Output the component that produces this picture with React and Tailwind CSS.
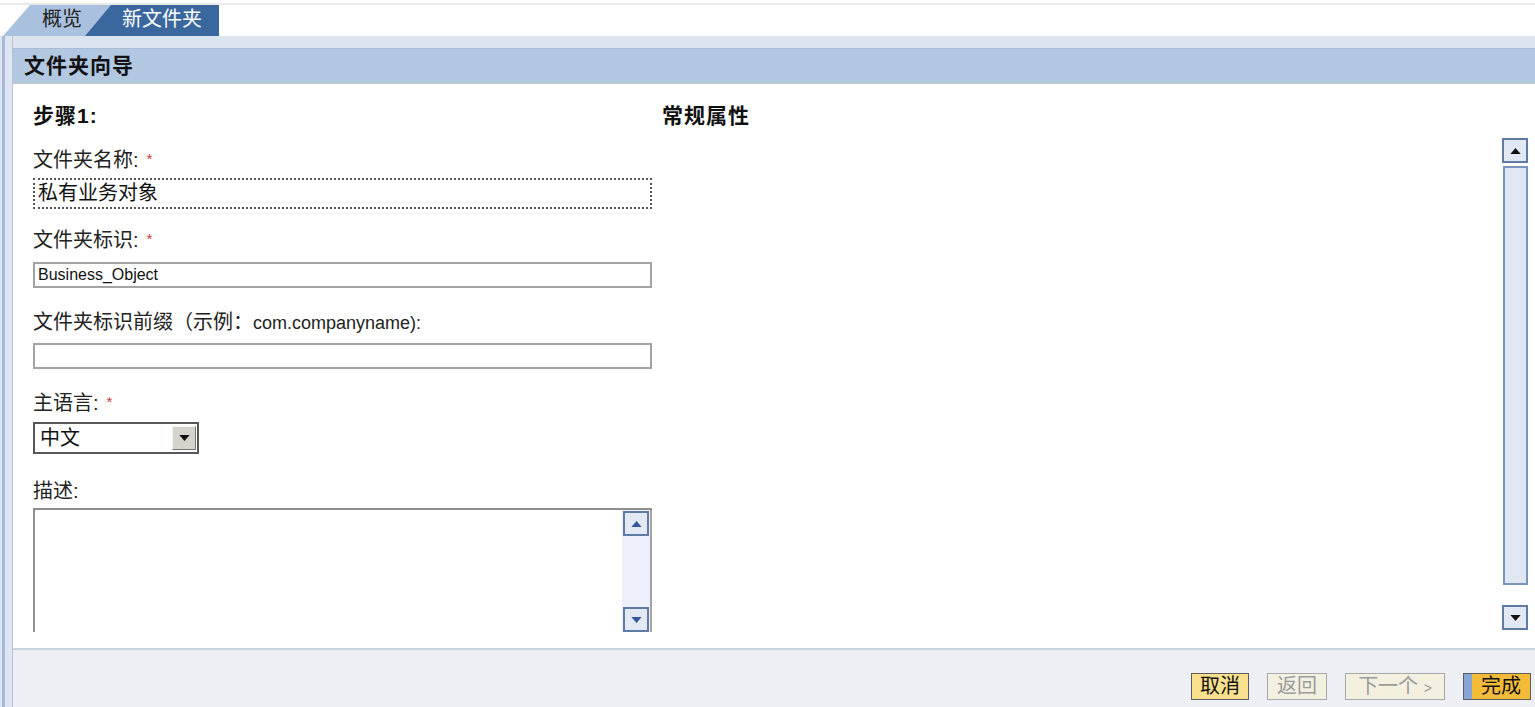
import React from "react";

const font = "font-['Liberation_Sans','Noto_Sans_CJK_SC',sans-serif]";

const Tri = ({ up, color = "#1a1a1a", w = 11, h = 6 }) => (
  <svg width={w} height={h} viewBox="0 0 12 7">
    <path d={up ? "M0 7 L6 0 L12 7 Z" : "M0 0 L6 7 L12 0 Z"} fill={color} />
  </svg>
);

const ScrollBtn = ({ up, color }) => (
  <div className="w-[26px] h-[25px] shrink-0 border-2 border-[#5f7aa5] bg-[#e2e9f5] flex items-center justify-center">
    <Tri up={up} color={color} />
  </div>
);

const Label = ({ children, required }) => (
  <div className="h-[24px] leading-[24px] text-[20px] text-[#222] whitespace-nowrap">
    {children}
    {required && (
      <span className="ml-[8px] text-[15px] text-[#cc3b3b] relative top-[-3px]">*</span>
    )}
  </div>
);

export default function App() {
  return (
    <div className={`${font} w-[1535px] h-[707px] flex flex-col bg-white overflow-hidden`}>
      {/* tab strip */}
      <div className="h-[36px] shrink-0 pt-[3px] flex flex-col">
        <div className="h-[2px] bg-[#e9e9e9]" />
        <div className="flex-1 flex items-end pl-[3px]">
          <div className="w-[109px] h-[31px] bg-[#a9c0de] [clip-path:polygon(27px_0,100%_0,100%_100%,0_100%)] pl-[39px] text-[20px] leading-[29px] text-[#222]">
            概览
          </div>
          <div className="ml-[-27px] w-[134px] h-[31px] bg-[#3b679f] [clip-path:polygon(26px_0,100%_0,100%_100%,0_100%)] pl-[37px] text-[20px] leading-[29px] text-white">
            新文件夹
          </div>
        </div>
      </div>

      {/* frame */}
      <div className="flex-1 flex bg-[#dde4f0]">
        <div className="w-[13px] shrink-0 bg-[#dfe5f3] flex border-r border-[#b6c3d1]">
          <div className="ml-[2px] w-[3px] bg-[#a9b8de]" />
        </div>

        <div className="flex-1 flex flex-col">
          <div className="h-[12px] shrink-0 bg-[#dce4ef]" />
          <div className="h-[34px] shrink-0 bg-[#b2c7e0] border-t border-[#a9bcd6] pl-[11px] text-[21px] font-bold leading-[33px] text-[#111] tracking-[1px]">
            文件夹向导
          </div>
          <div className="h-[2px] shrink-0 bg-[#bcc6d3]" />

          {/* white content panel */}
          <div className="h-[566px] shrink-0 bg-white border-b-2 border-[#c6d3dd] pl-[20px] pr-[6px] pt-[18px] flex flex-col">
            <div className="h-[28px] flex text-[21px] font-bold leading-[28px] text-[#111] tracking-[1px]">
              <div className="w-[629px]">步骤1:</div>
              <div>常规属性</div>
            </div>

            <div className="mt-[8px] h-[494px] flex">
              <div className="flex-1 overflow-hidden">
                <div className="w-[619px] pt-[10px] flex flex-col">
                  <Label required>文件夹名称:</Label>
                  <div className="mt-[6px] h-[31px] border-2 border-dotted border-[#555] px-[3px] text-[20px] leading-[26px] text-[#111]">
                    私有业务对象
                  </div>

                  <div className="mt-[19px]">
                    <Label required>文件夹标识:</Label>
                  </div>
                  <div className="mt-[10px] h-[26px] border-2 border-[#a3a3a3] px-[3px] text-[16px] leading-[22px] text-[#111]">
                    Business_Object
                  </div>

                  <div className="mt-[22px]">
                    <Label>
                      文件夹标识前缀（示例：<span className="text-[18px]">com.companyname):</span>
                    </Label>
                  </div>
                  <div className="mt-[9px] h-[26px] border-2 border-[#a3a3a3]" />

                  <div className="mt-[22px]">
                    <Label required>主语言:</Label>
                  </div>
                  <div className="mt-[7px] w-[166px] h-[32px] border-2 border-[#585858] bg-white flex items-center">
                    <div className="flex-1 pl-[5px] text-[20px] leading-[26px] text-[#111]">中文</div>
                    <div className="w-[24px] h-[24px] mr-[1px] bg-[#d6d3cc] border border-[#f4f4f4] border-r-[#777] border-b-[#777] flex items-center justify-center">
                      <Tri color="#111" w={11} h={6} />
                    </div>
                  </div>

                  <div className="mt-[25px]">
                    <Label>描述:</Label>
                  </div>
                  <div className="mt-[5px] h-[124px] flex border-t-2 border-l-2 border-[#8f8f8f]">
                    <div className="flex-1 bg-white" />
                    <div className="w-[30px] bg-[#edf0fa] border-r-2 border-[#a3a3a3] flex flex-col justify-between pl-[1px] pt-[1px]">
                      <ScrollBtn up color="#34589a" />
                      <ScrollBtn color="#34589a" />
                    </div>
                  </div>
                </div>
              </div>

              {/* right scrollbar */}
              <div className="w-[27px] flex flex-col pb-[2px]">
                <ScrollBtn up color="#111" />
                <div className="mt-[3px] ml-[1px] w-[25px] h-[419px] border-2 border-[#7a94bb] bg-[#dfe7f3]" />
                <div className="flex-1" />
                <ScrollBtn color="#111" />
              </div>
            </div>
          </div>

          {/* footer */}
          <div className="flex-1 bg-[#eeeff5] flex justify-end items-start pt-[23px] pr-[4px] gap-[18px]">
            <div className="h-[27px] w-[58px] bg-[#f9e08c] border border-[#5e5e5e] text-[20px] leading-[25px] text-[#111] text-center">
              取消
            </div>
            <div className="h-[27px] w-[60px] bg-[#f4f0e0] border border-[#a8a8a8] text-[20px] leading-[25px] text-[#9a9a9a] text-center">
              返回
            </div>
            <div className="h-[27px] w-[100px] bg-[#f4f0e0] border border-[#a8a8a8] text-[20px] leading-[25px] text-[#9a9a9a] text-center">
              下一个 <span className="text-[14px]">&gt;</span>
            </div>
            <div className="h-[27px] w-[68px] bg-[#f4bb38] border border-[#5e5e5e] flex">
              <div className="w-[8px] bg-[#86a5d6]" />
              <div className="flex-1 text-[20px] leading-[25px] text-[#111] text-center">完成</div>
            </div>
          </div>
        </div>
      </div>
    </div>
  );
}
